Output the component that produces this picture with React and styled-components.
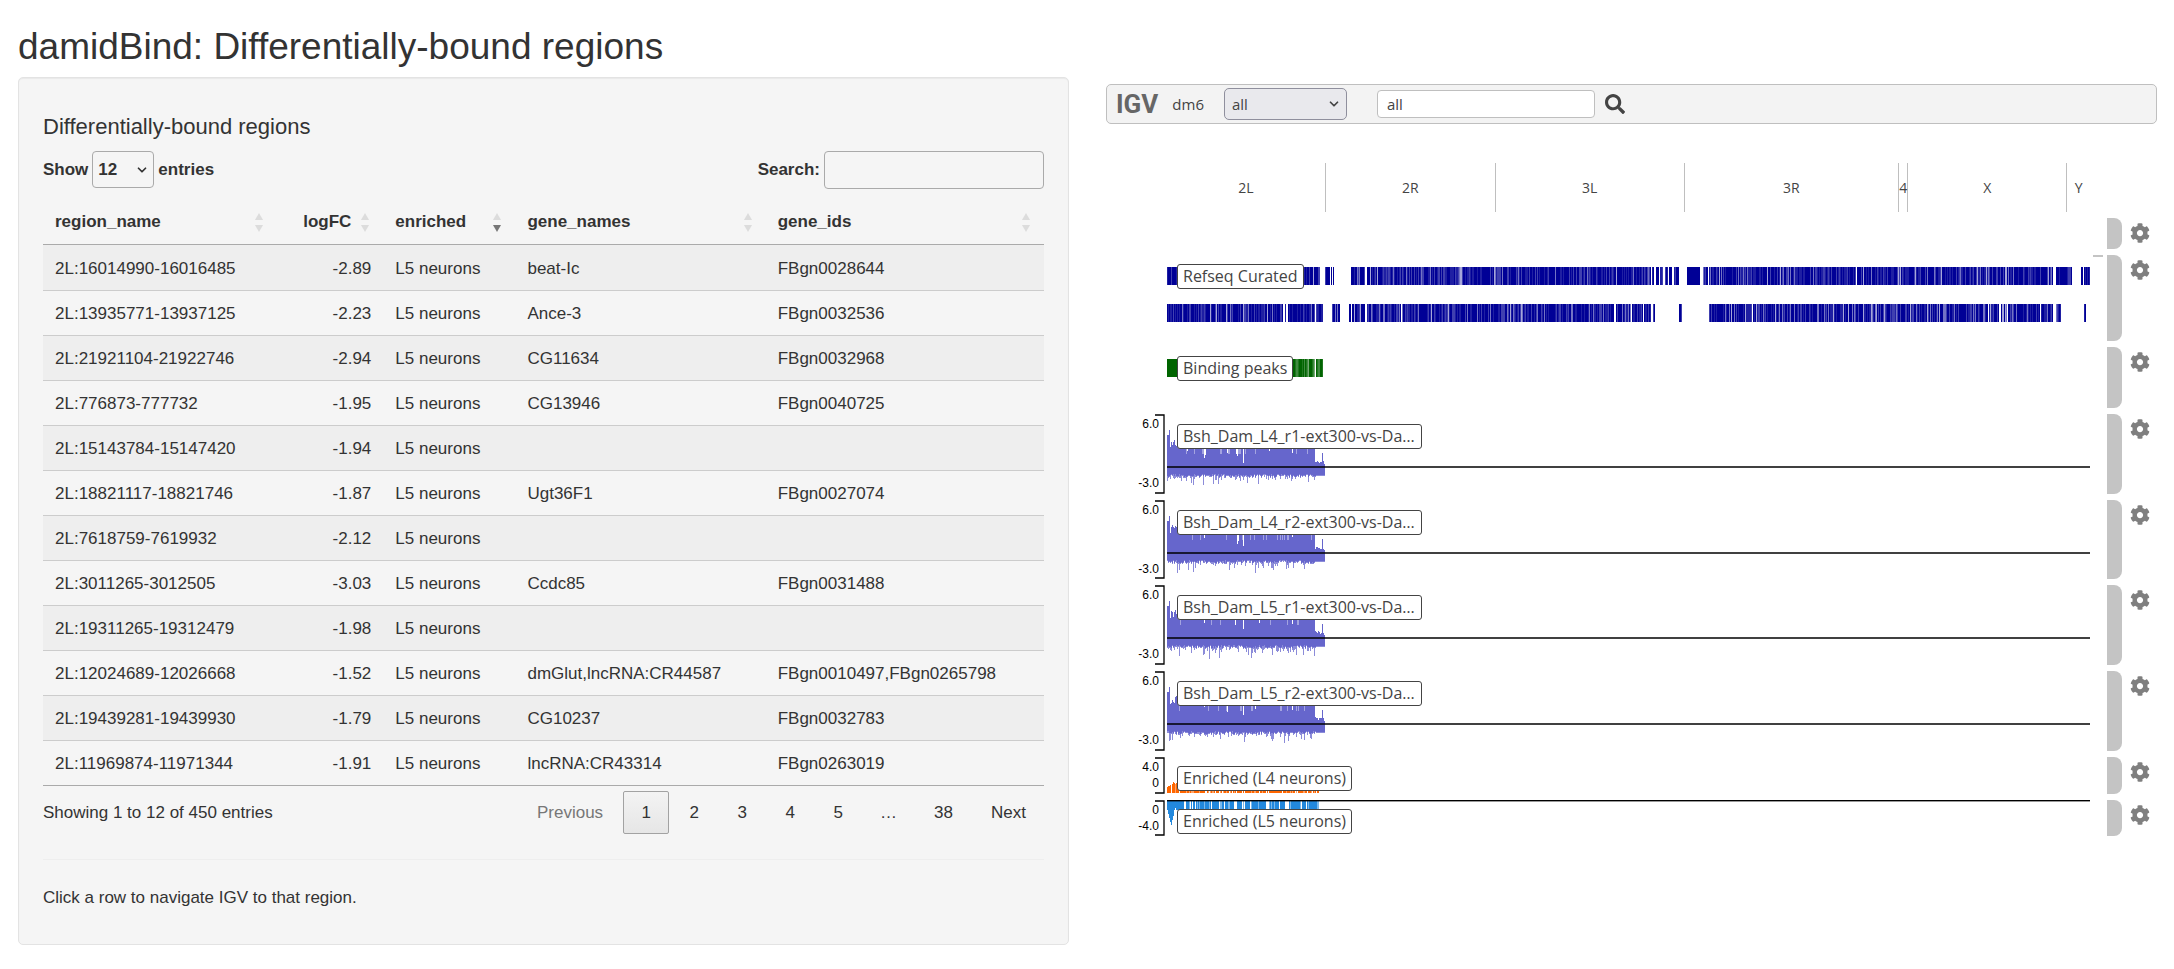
import React from 'react';
import styled, { createGlobalStyle, css } from 'styled-components';
import { FaCog, FaSearch } from 'react-icons/fa';
import { ChevronDown } from 'lucide-react';

const GlobalStyle = createGlobalStyle`
  *, *::before, *::after { box-sizing: border-box; }
  body {
    margin: 0;
    background: #fff;
    color: #333;
    font: 17px/24px "Liberation Sans", Arial, sans-serif;
  }
  button, input, select { font: inherit; color: inherit; }
`;

/* ---------- page ---------- */

const Page = styled.div`
  padding: 26px 17px 24px 18px;
`;

const Title = styled.h1`
  margin: 0 0 10px;
  font-size: 37px;
  line-height: 41px;
  font-weight: 400;
`;

const Columns = styled.main`
  display: grid;
  grid-template-columns: minmax(0, 1fr) minmax(0, 1fr);
  gap: 37px;
  align-items: start;
`;

const Panel = styled.section`
  padding: 24px;
  border: 1px solid #e3e3e3;
  border-radius: 5px;
  background: #f5f5f5;
  box-shadow: inset 0 1px 1px rgba(0, 0, 0, 0.05);
`;

const PanelHeading = styled.h2`
  margin: 13px 0 12px;
  font-size: 22px;
  line-height: 24px;
  font-weight: 400;
`;

const Rule = styled.hr`
  margin: 25px 0 26px;
  border: 0;
  border-top: 1px solid #eee;
`;

const Hint = styled.p`
  margin: 0 0 10px;
`;

/* ---------- table controls ---------- */

const Controls = styled.div`
  display: flex;
  justify-content: space-between;
  align-items: flex-start;
`;

const ControlLabel = styled.label`
  display: flex;
  align-items: center;
  gap: 4px;
  font-weight: 700;
`;

const SelectBox = styled.span`
  position: relative;
  display: inline-flex;
  align-items: center;

  svg {
    position: absolute;
    right: ${(p) => p.$inset};
    pointer-events: none;
  }
`;

const LengthSelect = styled.select`
  appearance: none;
  width: 62px;
  height: 37px;
  padding: 0 5px;
  border: 1px solid #aaa;
  border-radius: 4px;
  background: transparent;
`;

const SearchInput = styled.input`
  width: 220px;
  height: 38px;
  padding: 6px;
  border: 1px solid #aaa;
  border-radius: 4px;
  background: transparent;
  font-weight: 400;
`;

/* ---------- data table ---------- */

const Table = styled.table`
  width: 100%;
  margin-top: 9px;
  table-layout: fixed;
  border-collapse: separate;
  border-spacing: 0;
  border-bottom: 1px solid #aaa;
`;

const Col = styled.col`
  width: ${(p) => p.$width};
`;

const HeadCell = styled.th`
  padding: 12px 14px 10px 12px;
  border-bottom: 1px solid #aaa;
`;

const SortButton = styled.button`
  display: flex;
  width: 100%;
  align-items: center;
  justify-content: ${(p) => (p.$end ? 'flex-end' : 'space-between')};
  gap: 10px;
  padding: 0;
  border: 0;
  background: none;
  font-weight: 700;
  cursor: pointer;
`;

const Row = styled.tr`
  cursor: pointer;
  &:nth-child(odd) { background: #eee; }
  &:first-child td { border-top-color: transparent; }
`;

const Cell = styled.td`
  padding: 11px 12px 9px;
  border-top: 1px solid #ccc;
  text-align: ${(p) => (p.$end ? 'right' : 'left')};
  white-space: nowrap;
`;

const TableFooter = styled.div`
  display: flex;
  justify-content: space-between;
  align-items: center;
  margin-top: 5px;
`;

const Pager = styled.nav`
  display: flex;
  align-items: center;
  gap: 2px;
`;

const PageButton = styled.button`
  min-width: 46px;
  height: 43px;
  padding: 0 17px;
  border: 1px solid transparent;
  border-radius: 2px;
  background: none;
  cursor: pointer;

  &:disabled { color: #777; cursor: default; }

  ${(p) => p.$current && css`
    border-color: #a2a2a2;
    background: linear-gradient(#f3f3f3, #e6e6e6);
  `}
`;

const Ellipsis = styled.span`
  padding: 0 17px;
`;

/* ---------- genome browser ---------- */

const Browser = styled.section`
  padding-top: 7px;
  color: #444;
  font-family: "Open Sans", "Noto Sans", sans-serif;
`;

const Navbar = styled.header`
  display: flex;
  align-items: center;
  height: 40px;
  padding: 0 9px;
  border: 1px solid #bfbfbf;
  border-radius: 5px;
  background: #f3f3f3;
  font-size: 15px;
`;

const Logo = styled.span`
  color: #666;
  font: 700 26px/36px Roboto, sans-serif;
`;

const Genome = styled.span`
  margin: 0 20px 0 14px;
`;

const ChromSelect = styled.select`
  appearance: none;
  width: 123px;
  height: 32px;
  padding: 0 7px;
  border: 1px solid #8f8f9d;
  border-radius: 5px;
  background: #e9e9ed;
`;

const LocusInput = styled.input`
  width: 218px;
  height: 28px;
  margin: 0 10px 0 30px;
  padding: 0 9px;
  border: 1px solid #bfbfbf;
  border-radius: 4px;
  background: #fff;
`;

const IconButton = styled.button`
  display: inline-flex;
  padding: 0;
  border: 0;
  background: none;
  color: ${(p) => p.$color};
  cursor: pointer;
`;

const TrackGrid = styled.div`
  display: grid;
  grid-template-columns: 61px minmax(0, 1fr) 17px 15px 35px;
`;

const Chromosomes = styled(TrackGrid)`
  margin: 39px 0 6px;
`;

const ChromStrip = styled.div`
  display: flex;
  height: 49px;
`;

const Chrom = styled.span`
  display: flex;
  flex: ${(p) => p.$span} 0 0;
  min-width: 0;
  align-items: center;
  justify-content: center;
  border-right: 1px solid #bfbfbf;
  font-size: 14px;

  &:last-child { border-right: 0; }
`;

const Tracks = styled.div`
  display: flex;
  flex-direction: column;
  gap: 6px;
`;

const Track = styled(TrackGrid)`
  height: ${(p) => p.$height}px;
`;

const Viewport = styled.div`
  position: relative;
  grid-column: 2;

  > svg { display: block; width: 100%; height: 100%; }
`;

const TrackLabel = styled.span`
  position: absolute;
  top: 9px;
  left: 10px;
  padding: 0 5px;
  border: 1px solid #444;
  border-radius: 3px;
  background: #fff;
  font-size: 16px;
  line-height: 23px;
  white-space: nowrap;
`;

const SignalLabel = styled(TrackLabel)`
  top: 10px;
  min-width: 245px;
`;

const ScrollThumb = styled.span`
  grid-column: 3;
  width: 10px;
  height: 2px;
  margin-left: 3px;
  background: #c4c4c4;
`;

const Grip = styled.span`
  grid-column: 4;
  border-radius: 0 8px 8px 0;
  background: #c4c4c4;
`;

const GearSlot = styled.div`
  grid-column: 5;
  padding: 5px 0 0 8px;
  line-height: 0;
`;

/* ---------- data ---------- */

const columns = [
  { key: 'region_name', width: '23.4%' },
  { key: 'logFC', width: '10.6%', end: true },
  { key: 'enriched', width: '13.2%', sorted: true },
  { key: 'gene_names', width: '25%' },
  { key: 'gene_ids', width: '27.8%' },
];

const rows = [
  ['2L:16014990-16016485', '-2.89', 'L5 neurons', 'beat-Ic', 'FBgn0028644'],
  ['2L:13935771-13937125', '-2.23', 'L5 neurons', 'Ance-3', 'FBgn0032536'],
  ['2L:21921104-21922746', '-2.94', 'L5 neurons', 'CG11634', 'FBgn0032968'],
  ['2L:776873-777732', '-1.95', 'L5 neurons', 'CG13946', 'FBgn0040725'],
  ['2L:15143784-15147420', '-1.94', 'L5 neurons', '', ''],
  ['2L:18821117-18821746', '-1.87', 'L5 neurons', 'Ugt36F1', 'FBgn0027074'],
  ['2L:7618759-7619932', '-2.12', 'L5 neurons', '', ''],
  ['2L:3011265-3012505', '-3.03', 'L5 neurons', 'Ccdc85', 'FBgn0031488'],
  ['2L:19311265-19312479', '-1.98', 'L5 neurons', '', ''],
  ['2L:12024689-12026668', '-1.52', 'L5 neurons', 'dmGlut,lncRNA:CR44587', 'FBgn0010497,FBgn0265798'],
  ['2L:19439281-19439930', '-1.79', 'L5 neurons', 'CG10237', 'FBgn0032783'],
  ['2L:11969874-11971344', '-1.91', 'L5 neurons', 'lncRNA:CR43314', 'FBgn0263019'],
];

const chromosomes = [
  ['2L', 159], ['2R', 170], ['3L', 189], ['3R', 215], ['4', 8], ['X', 159], ['Y', 23],
];

/* Genome-wide x axis, in units shared by every track drawing. */
const GENOME_WIDTH = 923;

/* [start, end] runs holding features; a third value thins the run out. */
const forwardRuns = [
  [0, 153], [158, 163], [164, 165], [166, 167], [184, 198], [200, 484], [485, 487],
  [489, 492], [493, 496], [498, 501], [502, 505], [507, 512], [520, 533, 0], [536, 541],
  [542, 689], [690, 876], [876, 886, 3], [889, 905], [914, 916], [917, 923],
];
const reverseRuns = [
  [0, 116], [118, 119], [121, 148], [149, 156], [165, 173], [182, 184], [185, 198, 2], [200, 234],
  [235, 447], [449, 464], [465, 476], [477, 484], [486, 488], [512, 515, 2], [542, 585],
  [586, 821], [822, 832], [834, 840, 3], [841, 873], [874, 886], [889, 894, 2], [917, 919],
];
const peakRuns = [[0, 10, 0], [10, 148], [149, 156]];

const tracks = [
  { id: 'ruler', height: 31 },
  { id: 'refseq', height: 86, label: 'Refseq Curated', thumb: true, kind: 'genes' },
  { id: 'peaks', height: 61, label: 'Binding peaks', kind: 'peaks' },
  { id: 'l4r1', height: 80, label: 'Bsh_Dam_L4_r1-ext300-vs-Da…', kind: 'signal', seed: 11, dips: { 20: 16, 37: 9, 38: 12, 60: 14, 69: 13, 70: 11, 76: 4, 102: 16, 125: 14 } },
  { id: 'l4r2', height: 79, label: 'Bsh_Dam_L4_r2-ext300-vs-Da…', kind: 'signal', seed: 23, dips: { 37: 15, 70: 9, 71: 12, 76: 7, 125: 16 } },
  { id: 'l5r1', height: 80, label: 'Bsh_Dam_L5_r1-ext300-vs-Da…', kind: 'signal', seed: 37, dips: { 37: 15, 68: 13, 76: 9, 92: 15, 125: 14 } },
  { id: 'l5r2', height: 80, label: 'Bsh_Dam_L5_r2-ext300-vs-Da…', kind: 'signal', seed: 53, dips: { 37: 17, 60: 12, 76: 9, 88: 15, 125: 14 } },
  { id: 'enrL4', height: 37, label: 'Enriched (L4 neurons)', kind: 'up' },
  { id: 'enrL5', height: 36, label: 'Enriched (L5 neurons)', kind: 'down' },
];

/* ---------- drawings ---------- */

function makeRandom(seed) {
  let s = seed;
  return () => {
    s = (s + 0x6d2b79f5) | 0;
    let t = Math.imul(s ^ (s >>> 15), 1 | s);
    t = (t + Math.imul(t ^ (t >>> 7), 61 | t)) ^ t;
    return ((t ^ (t >>> 14)) >>> 0) / 4294967296;
  };
}

function Barcode({ runs, y, color, seed }) {
  const random = makeRandom(seed);
  const bars = [];
  runs.forEach(([start, end, thin = 1]) => {
    for (let x = start; x < end; x += 1) {
      const r = thin === 0 ? 0 : random() * (1 + (thin - 1) * 0.25);
      let opacity = 1;
      if (r > 0.97) opacity = 0.35;
      else if (r > 0.9) opacity = 0.55;
      else if (r > 0.75) opacity = 0.75;
      else if (r > 0.5) opacity = 0.88;
      bars.push(<rect key={x} x={x} y={y} width="1" height="18" opacity={opacity} />);
    }
  });
  return <g fill={color} shapeRendering="crispEdges">{bars}</g>;
}

function signalHeight(x, random) {
  if (x < 2) return 32;
  if (x === 2) return 37;
  if (x === 3) return 20;
  if (x < 10) return 20 + Math.round(random() * 8);
  if (x < 148) return 21;
  if (x === 155) return 14;
  if (x === 157) return 3;
  return 4 + Math.round(random() * 3);
}

function Signal({ seed, dips }) {
  const random = makeRandom(seed);
  const bars = [];
  for (let x = 0; x < 158; x += 1) {
    const up = dips[x] || signalHeight(x, random);
    const down = 7 + Math.round(random() * 3);
    const spike = random() > 0.5 ? Math.round(random() * random() * 11) : 0;
    const end = x > 148 ? 8 : down;
    bars.push(
      <rect key={x} x={x} y={53 - up} width="1" height={up + end} />,
      <rect key={`s${x}`} x={x} y={53 + end} width="1" height={x > 148 ? 1 : spike + 1} opacity="0.75" />,
    );
    if (x > 9 && x < 148 && !dips[x] && random() > 0.88) {
      bars.push(<rect key={`l${x}`} x={x} y={35} width="1" height="5" fill="#fff" opacity="0.4" />);
    }
  }
  return (
    <>
      <g fill="#6666cc" shapeRendering="crispEdges">{bars}</g>
      <line x1="0" x2={GENOME_WIDTH} y1="53" y2="53" stroke="#000" strokeWidth="1.4" />
    </>
  );
}

function EnrichedUp() {
  const random = makeRandom(5);
  const heights = [6, 7, 7, 8, 0, 9, 11, 10, 9, 10, 10];
  const bars = [];
  for (let x = 0; x < 152; x += 1) {
    const gap = x > 10 && random() < 0.12;
    const h = x < heights.length ? heights[x] : 9;
    if (!gap) bars.push(<rect key={x} x={x} y={36 - h} width="1" height={h} opacity={random() > 0.8 ? 0.6 : 1} />);
  }
  return <g fill="#ff6600" shapeRendering="crispEdges">{bars}</g>;
}

function EnrichedDown() {
  const random = makeRandom(17);
  const depths = [10, 14, 18, 22, 25, 20, 16, 10, 8, 10];
  const bars = [];
  let on = true;
  for (let x = 0; x < 153; x += 1) {
    if (x >= depths.length) on = on ? random() > 0.12 : random() > 0.45;
    const h = x < depths.length ? depths[x] : 10;
    if (on) bars.push(<rect key={x} x={x} y="0" width="1" height={h} opacity={random() > 0.8 ? 0.6 : 1} />);
  }
  return (
    <>
      <g fill="#2288dd" shapeRendering="crispEdges">{bars}</g>
      <rect width={GENOME_WIDTH} height="1.4" fill="#000" />
    </>
  );
}

function TrackDrawing({ track }) {
  return (
    <svg viewBox={`0 0 ${GENOME_WIDTH} ${track.height}`} preserveAspectRatio="none" aria-hidden="true">
      {track.kind === 'genes' && (
        <>
          <Barcode runs={forwardRuns} y={12} color="#000096" seed={3} />
          <Barcode runs={reverseRuns} y={49} color="#000096" seed={8} />
        </>
      )}
      {track.kind === 'peaks' && <Barcode runs={peakRuns} y={12} color="#006400" seed={14} />}
      {track.kind === 'signal' && <Signal seed={track.seed} dips={track.dips} />}
      {track.kind === 'up' && <EnrichedUp />}
      {track.kind === 'down' && <EnrichedDown />}
    </svg>
  );
}

const axisTicks = {
  signal: [['6.0', 14], ['-3.0', 73]],
  up: [['4.0', 14], ['0', 30]],
  down: [['0', 14], ['-4.0', 30]],
};

function Axis({ track }) {
  const bottom = track.height - 1;
  return (
    <svg width="61" height={track.height} aria-label="Axis">
      <path d={`M49 1H58V${bottom}H49`} fill="none" stroke="#000" strokeWidth="1.3" />
      {axisTicks[track.kind].map(([text, y]) => (
        <text key={text} x="53" y={y} textAnchor="end" fontSize="12" fontFamily="Liberation Sans, Arial, sans-serif" fill="#000">
          {text}
        </text>
      ))}
    </svg>
  );
}

function SortIcon({ sorted }) {
  return (
    <svg width="8" height="20" viewBox="0 0 8 20" aria-hidden="true">
      <path d="M0 8L4 1L8 8Z" fill="#dcdcdc" />
      <path d="M0 13L4 20L8 13Z" fill={sorted ? '#777' : '#dcdcdc'} />
    </svg>
  );
}

/* ---------- sections ---------- */

function RegionTable() {
  return (
    <Table>
      <colgroup>
        {columns.map((c) => <Col key={c.key} $width={c.width} />)}
      </colgroup>
      <thead>
        <tr>
          {columns.map((c) => (
            <HeadCell key={c.key} scope="col" aria-sort={c.sorted ? 'descending' : undefined}>
              <SortButton type="button" $end={c.end}>
                {c.key}
                <SortIcon sorted={c.sorted} />
              </SortButton>
            </HeadCell>
          ))}
        </tr>
      </thead>
      <tbody>
        {rows.map((row) => (
          <Row key={row[0]}>
            {row.map((value, i) => <Cell key={columns[i].key} $end={columns[i].end}>{value}</Cell>)}
          </Row>
        ))}
      </tbody>
    </Table>
  );
}

function RegionsPanel() {
  return (
    <Panel>
      <PanelHeading>Differentially-bound regions</PanelHeading>
      <Controls>
        <ControlLabel htmlFor="length">
          Show
          <SelectBox $inset="5px">
            <LengthSelect id="length" defaultValue="12">
              <option>12</option>
              <option>25</option>
              <option>50</option>
            </LengthSelect>
            <ChevronDown size={14} strokeWidth={3} />
          </SelectBox>
          entries
        </ControlLabel>
        <ControlLabel htmlFor="search">
          Search:
          <SearchInput id="search" type="search" />
        </ControlLabel>
      </Controls>
      <RegionTable />
      <TableFooter>
        <span>Showing 1 to 12 of 450 entries</span>
        <Pager aria-label="Table pages">
          <PageButton type="button" disabled>Previous</PageButton>
          <PageButton type="button" $current aria-current="page">1</PageButton>
          {[2, 3, 4, 5].map((n) => <PageButton type="button" key={n}>{n}</PageButton>)}
          <Ellipsis>…</Ellipsis>
          <PageButton type="button">38</PageButton>
          <PageButton type="button">Next</PageButton>
        </Pager>
      </TableFooter>
      <Rule />
      <Hint>Click a row to navigate IGV to that region.</Hint>
    </Panel>
  );
}

function TrackRow({ track }) {
  const Label = track.kind === 'signal' ? SignalLabel : TrackLabel;
  return (
    <Track $height={track.height}>
      {axisTicks[track.kind] && <Axis track={track} />}
      <Viewport>
        {track.kind && <TrackDrawing track={track} />}
        {track.label && <Label>{track.label}</Label>}
      </Viewport>
      {track.thumb && <ScrollThumb />}
      <Grip />
      <GearSlot>
        <IconButton type="button" $color="#7f7f7f" aria-label={`${track.label || 'Ruler'} settings`}>
          <FaCog size={20} />
        </IconButton>
      </GearSlot>
    </Track>
  );
}

function GenomeBrowser() {
  return (
    <Browser>
      <Navbar>
        <Logo>IGV</Logo>
        <Genome>dm6</Genome>
        <SelectBox $inset="6px">
          <ChromSelect aria-label="Chromosome" defaultValue="all">
            <option>all</option>
            {chromosomes.map(([name]) => <option key={name}>{name}</option>)}
          </ChromSelect>
          <ChevronDown size={14} strokeWidth={3} />
        </SelectBox>
        <LocusInput aria-label="Locus" type="text" defaultValue="all" />
        <IconButton type="button" $color="#444" aria-label="Search locus">
          <FaSearch size={20} />
        </IconButton>
      </Navbar>
      <Chromosomes>
        <span />
        <ChromStrip>
          {chromosomes.map(([name, span]) => <Chrom key={name} $span={span}>{name}</Chrom>)}
        </ChromStrip>
      </Chromosomes>
      <Tracks>
        {tracks.map((track) => <TrackRow key={track.id} track={track} />)}
      </Tracks>
    </Browser>
  );
}

export default function App() {
  return (
    <>
      <GlobalStyle />
      <Page>
        <Title>damidBind: Differentially-bound regions</Title>
        <Columns>
          <RegionsPanel />
          <GenomeBrowser />
        </Columns>
      </Page>
    </>
  );
}
